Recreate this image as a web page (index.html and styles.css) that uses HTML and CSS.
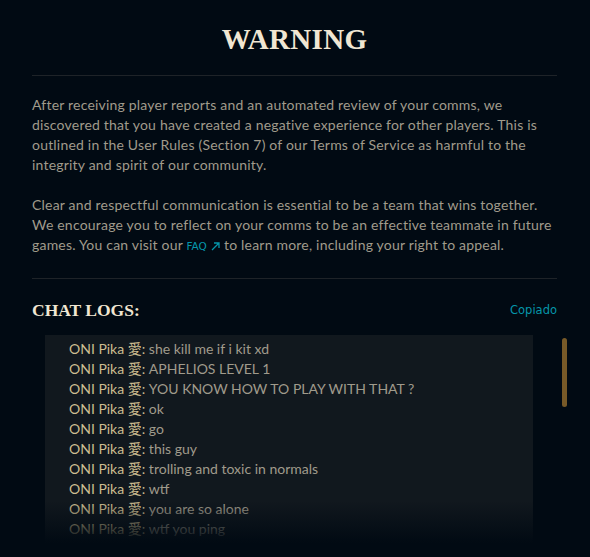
FILE: index.html
```html
<!DOCTYPE html>
<html>
	<head>
		<meta name="viewport" content="width=device-width, initial-scale=1" />
		<link rel="stylesheet" href="styles.css">
	</head>

	<body>
		<div class="modal">
			<h1 class="title">WARNING</h1>
			<hr class="divider" />
			<p class="notice">After receiving player reports and an automated review of your comms, we discovered that you have created a negative experience for other players. This is outlined in the User Rules (Section 7) of our Terms of Service as harmful to the integrity and spirit of our community.</p>
			<p class="notice">Clear and respectful communication is essential to be a team that wins together. We encourage you to reflect on your comms to be an effective teammate in future games. You can visit our <a class="faq" href="#">FAQ <svg class="faq-arrow" width="9" height="9" viewBox="0 0 9 9"><path d="M1 8 L8 1 M3 1 H8 V6" fill="none" stroke="currentColor" stroke-width="1.3" /></svg></a> to learn more, including your right to appeal.</p>
			<hr class="divider divider-low" />

			<div class="logs-head">
				<h2 class="logs-title">CHAT LOGS:</h2>
				<span class="copied">Copiado</span>
			</div>

			<div class="logs-body">
				<div class="logs">
					<div class="line"><span class="who">ONI Pika 愛:</span> she kill me if i kit xd</div>
					<div class="line"><span class="who">ONI Pika 愛:</span> APHELIOS LEVEL 1</div>
					<div class="line"><span class="who">ONI Pika 愛:</span> YOU KNOW HOW TO PLAY WITH THAT ?</div>
					<div class="line"><span class="who">ONI Pika 愛:</span> ok</div>
					<div class="line"><span class="who">ONI Pika 愛:</span> go</div>
					<div class="line"><span class="who">ONI Pika 愛:</span> this guy</div>
					<div class="line"><span class="who">ONI Pika 愛:</span> trolling and toxic in normals</div>
					<div class="line"><span class="who">ONI Pika 愛:</span> wtf</div>
					<div class="line"><span class="who">ONI Pika 愛:</span> you are so alone</div>
					<div class="line"><span class="who">ONI Pika 愛:</span> wtf you ping</div>
				</div>
				<div class="scroll-track"><div class="scroll-thumb"></div></div>
			</div>
		</div>
	</body>
</html>
```

FILE: styles.css
```css
html, body {
    height: 100%;
}

body {
    margin: 0;
    overflow: hidden;
    background-color: #010a13;
    font-family: Lato, "Noto Sans CJK JP", sans-serif;
    font-size: 14px;
    line-height: 20px;
    color: #a09b8c;
}

.modal {
    height: 100%;
    padding: 0 33px 0 32px;
    display: flex;
    flex-direction: column;
}

.title {
    margin: 23px 0 0;
    font-family: "Liberation Serif", serif;
    font-weight: bold;
    font-size: 29px;
    line-height: 32px;
    letter-spacing: 0.3px;
    text-align: center;
    color: #f0e6d2;
}

.divider {
    margin: 20px 0 0;
    border: 0;
    height: 1px;
    background-color: #1e2328;
}

.divider-low { margin-top: 22px; }

.notice {
    margin: 19px -4px 0 0;
    letter-spacing: 0.2px;
}

.notice + .notice { margin-top: 20px; }

.faq {
    color: #0596aa;
    text-decoration: none;
    font-family: "DejaVu Sans", sans-serif;
    font-size: 10.5px;
    letter-spacing: 0;
}

.faq-arrow { vertical-align: -1px; margin-left: 1px; }

.logs-head {
    margin-top: 20px;
    display: flex;
    justify-content: space-between;
    align-items: center;
}

.logs-title {
    margin: 0;
    font-family: "Liberation Serif", serif;
    font-weight: bold;
    font-size: 17.5px;
    line-height: 22px;
    color: #f0e6d2;
}

.copied {
    font-family: "DejaVu Sans", sans-serif;
    font-size: 11.5px;
    line-height: 16px;
    color: #0596aa;
}

.logs-body {
    margin-top: 14px;
    flex: 1;
    min-height: 0;
    display: flex;
}

.logs {
    position: relative;
    margin-left: 13px;
    width: 464px;
    padding: 4px 0 0 24px;
    overflow: hidden;
    background-color: #11181e;
}

.logs::after {
    content: "";
    position: absolute;
    left: 0;
    right: 0;
    bottom: 0;
    height: 56px;
    background: linear-gradient(rgba(1, 10, 19, 0), #010a13 75%);
}

.line { white-space: nowrap; }

.who { color: #cdbe91; }

.scroll-track {
    margin-left: auto;
    margin-right: -10px;
    width: 5px;
}

.scroll-thumb {
    margin-top: 3px;
    height: 69px;
    border-radius: 3px;
    background-color: #785a28;
}
```
